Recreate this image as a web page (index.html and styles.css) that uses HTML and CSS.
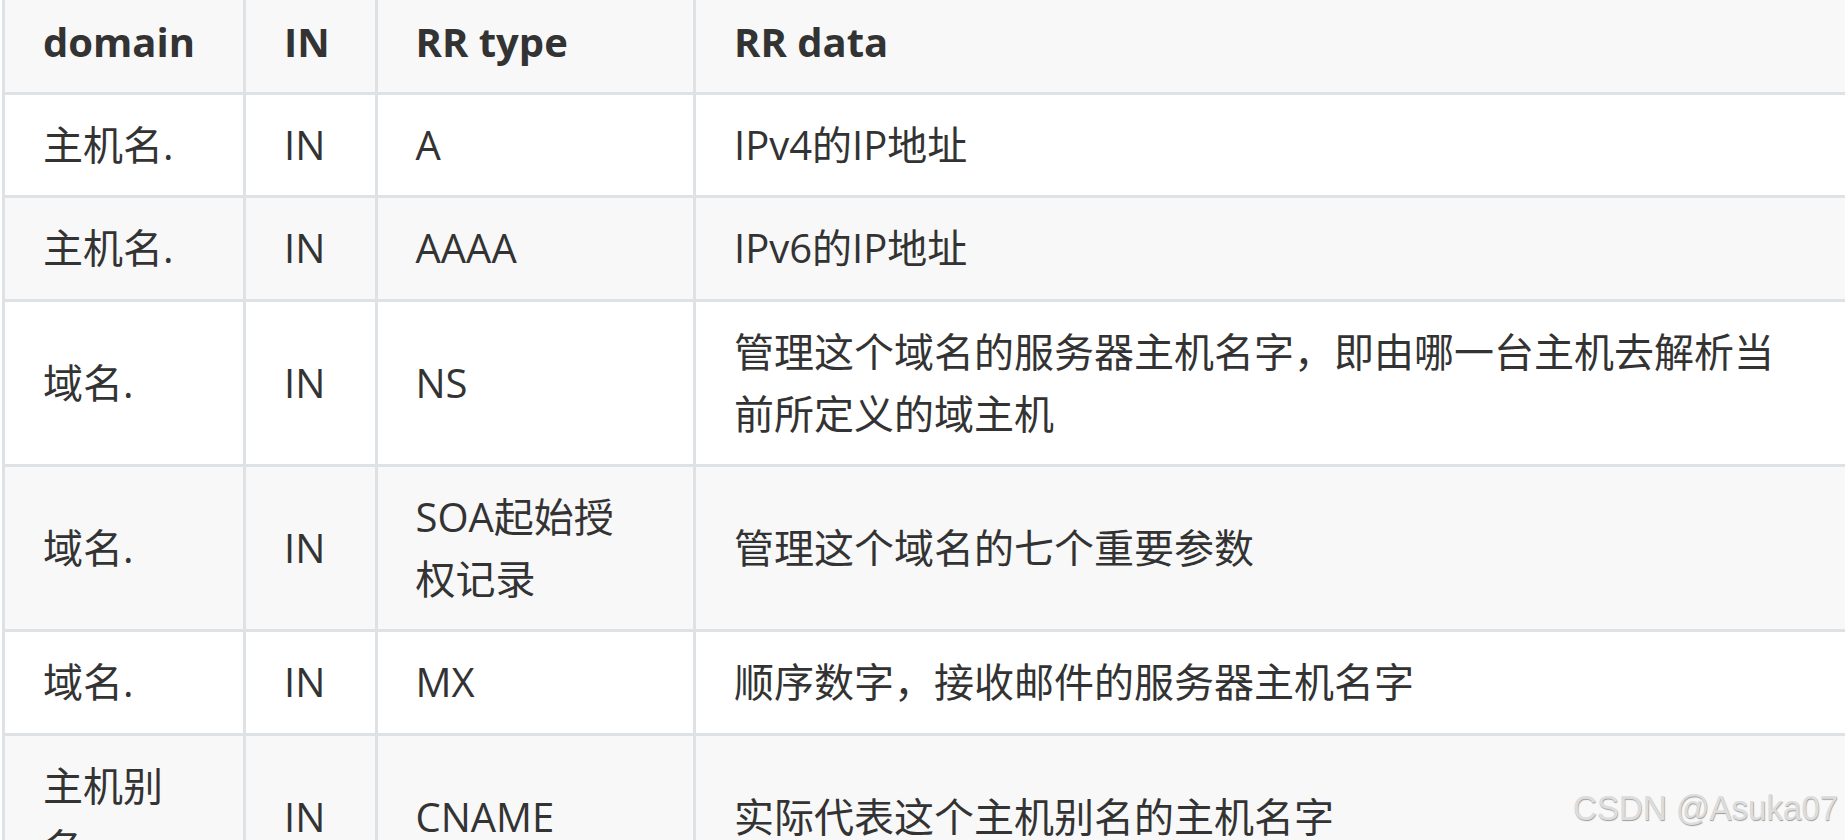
FILE: index.html
```html
<!DOCTYPE html>
<html lang="zh-CN">
<head>
<meta charset="utf-8">
<title>DNS RR</title>
<link rel="stylesheet" href="styles.css">
</head>
<body>
<div class="page">
  <table class="rr">
    <colgroup>
      <col class="c1">
      <col class="c2">
      <col class="c3">
      <col class="c4">
    </colgroup>
    <thead>
      <tr><th>domain</th><th>IN</th><th>RR type</th><th>RR data</th></tr>
    </thead>
    <tbody>
      <tr><td>主机名.</td><td>IN</td><td>A</td><td>IPv4的IP地址</td></tr>
      <tr><td>主机名.</td><td>IN</td><td>AAAA</td><td>IPv6的IP地址</td></tr>
      <tr><td>域名.</td><td>IN</td><td>NS</td><td>管理这个域名的服务器主机名字，即由哪一台主机去解析当前所定义的域主机</td></tr>
      <tr><td>域名.</td><td>IN</td><td>SOA起始授权记录</td><td>管理这个域名的七个重要参数</td></tr>
      <tr><td>域名.</td><td>IN</td><td>MX</td><td>顺序数字，接收邮件的服务器主机名字</td></tr>
      <tr><td>主机别名.</td><td>IN</td><td>CNAME</td><td>实际代表这个主机别名的主机名字</td></tr>
    </tbody>
  </table>
  <div class="watermark">CSDN @Asuka07</div>
</div>
</body>
</html>
```
FILE: styles.css
```css
html, body {
  margin: 0;
  padding: 0;
  background: #ffffff;
  overflow: hidden;
}
.page {
  position: relative;
  width: 1845px;
  height: 840px;
  overflow: hidden;
}
.rr {
  margin: -11px 0 0 2px;
  border-collapse: collapse;
  table-layout: fixed;
  width: 1850px;
  font-family: "Open Sans", "Noto Sans CJK SC", sans-serif;
  font-size: 40px;
  line-height: 62.2px;
  color: #333333;
}
.c1 { width: 241px; }
.c2 { width: 131.5px; }
.c3 { width: 318.5px; }
.c4 { width: 1159px; }
.rr th,
.rr td {
  border: 3px solid #dfe2e5;
  padding: 19px 44px 19px 38px;
  text-align: left;
  vertical-align: middle;
  word-break: break-all;
}
.rr th {
  font-weight: 700;
  background: #f8f8f8;
}
.rr tbody tr:nth-child(even) td {
  background: #f8f8f8;
}
.rr tbody tr:nth-child(odd) td {
  background: #ffffff;
}
.watermark {
  position: absolute;
  left: 1573px;
  top: 788px;
  font-family: "Liberation Sans", Arial, sans-serif;
  font-size: 35px;
  line-height: 40px;
  color: #dddddd;
  text-shadow: 0.6px 0.6px 1px #9c9c9c;
  transform: scaleX(0.945);
  transform-origin: left top;
  white-space: nowrap;
}
```
